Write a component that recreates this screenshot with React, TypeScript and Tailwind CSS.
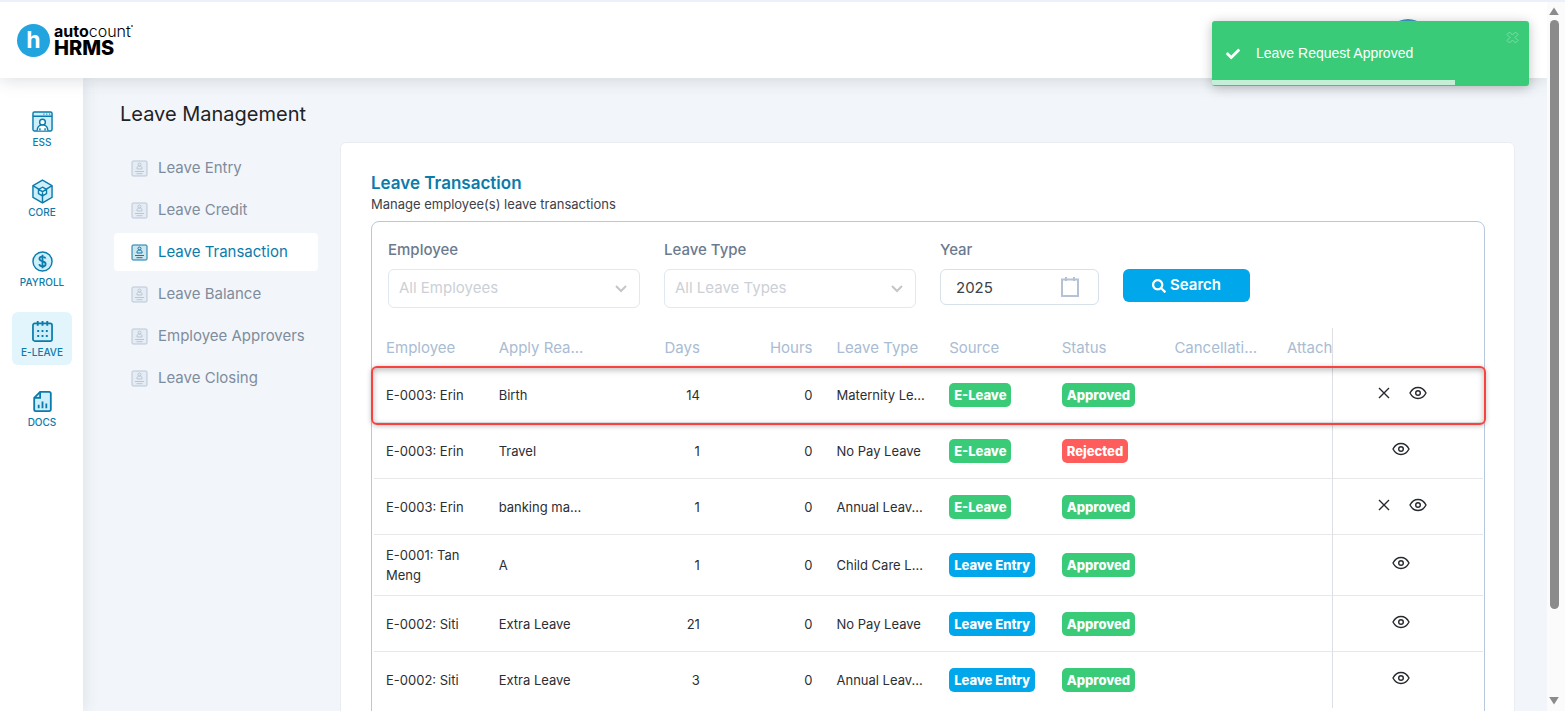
import React from "react";
import { FaCheck, FaSearch } from "react-icons/fa";
import clsx from "clsx";

interface LeaveRow {
  employee: string;
  reason: string;
  days: number;
  hours: number;
  leaveType: string;
  source: "E-Leave" | "Leave Entry";
  status: "Approved" | "Rejected";
  cancellable?: boolean;
  highlighted?: boolean;
}

const rows: LeaveRow[] = [
  { employee: "E-0003: Erin", reason: "Birth", days: 14, hours: 0, leaveType: "Maternity Le...", source: "E-Leave", status: "Approved", cancellable: true, highlighted: true },
  { employee: "E-0003: Erin", reason: "Travel", days: 1, hours: 0, leaveType: "No Pay Leave", source: "E-Leave", status: "Rejected" },
  { employee: "E-0003: Erin", reason: "banking ma...", days: 1, hours: 0, leaveType: "Annual Leav...", source: "E-Leave", status: "Approved", cancellable: true },
  { employee: "E-0001: Tan Meng", reason: "A", days: 1, hours: 0, leaveType: "Child Care L...", source: "Leave Entry", status: "Approved" },
  { employee: "E-0002: Siti", reason: "Extra Leave", days: 21, hours: 0, leaveType: "No Pay Leave", source: "Leave Entry", status: "Approved" },
  { employee: "E-0002: Siti", reason: "Extra Leave", days: 3, hours: 0, leaveType: "Annual Leav...", source: "Leave Entry", status: "Approved" },
];

const menu = [
  "Leave Entry",
  "Leave Credit",
  "Leave Transaction",
  "Leave Balance",
  "Employee Approvers",
  "Leave Closing",
];

const badgeColors = {
  "E-Leave": "bg-[#3acb78]",
  "Leave Entry": "bg-[#00a7ea]",
  Approved: "bg-[#3acb78]",
  Rejected: "bg-[#ff5c5c]",
};

const moduleIcons = {
  ESS: (
    <>
      <rect x="1" y="1" width="20" height="20" rx="1.5" fill="#cdeffb" />
      <path d="M1 5.5h20M12 3.3h1M15 3.3h1M18 3.3h1" />
      <circle cx="11" cy="11.7" r="3" fill="#fff" />
      <path d="M5.5 20.5c0-3 2-5.2 4-5.7h3c2 .5 4 2.700 4 5.700M8.300 18v2.500M13.700 18v2.500" fill="#fff" />
    </>
  ),
  CORE: (
    <>
      <path d="M11-1 21 4.800v12.400L11 23 1 17.200V4.800z" fill="#cdeffb" />
      <path d="m1 4.800 6 3.700M21 4.800l-6 3.700M11 15.500V23" />
      <path d="m11 6.500 4.200 2.300v4.500L11 15.700l-4.200-2.400V8.800zM6.800 8.800 11 11.200l4.200-2.400M11 11.200v4.500" fill="#e6f7fd" />
    </>
  ),
  PAYROLL: (
    <>
      <circle cx="11" cy="11" r="10" fill="#cdeffb" />
      <path d="M14.200 7.800c-.4-1.300-1.500-2-3.200-2-1.900 0-3.200.9-3.200 2.400 0 3.600 6.500 1.700 6.500 5.300 0 1.600-1.400 2.600-3.300 2.600-1.800 0-3.100-.8-3.400-2.300M11 4v14" strokeWidth="1.900" />
    </>
  ),
  "E-LEAVE": (
    <>
      <rect x="1" y="2.500" width="20" height="18.500" rx="2" fill="#cdeffb" strokeWidth="1.800" />
      <path d="M6 0v5M11 0v5M16 0v5" strokeWidth="2" />
      <path d="M5.500 10.500h2M10 10.500h2M14.500 10.500h2M5.500 15.700h2M10 15.700h2M14.500 15.700h2" strokeWidth="2" />
    </>
  ),
  DOCS: (
    <>
      <path d="M8.500 1H18a1.700 1.700 0 0 1 1.700 1.700v16.600A1.700 1.700 0 0 1 18 21H4a1.700 1.700 0 0 1-1.700-1.700V7.200z" fill="#cdeffb" strokeWidth="1.900" />
      <path d="M8.500 1v6.200H2.300M7 14.500V18M11 11v7M15 13v5" strokeWidth="1.900" />
    </>
  ),
};

const EntryIcon = () => (
  <svg viewBox="0 0 17 17" className="size-[17px] shrink-0" fill="none" stroke="currentColor">
    <rect x="1" y="1" width="15" height="15" rx="1" fill="currentColor" fillOpacity="0.2" />
    <circle cx="8.500" cy="4.500" r="1.500" />
    <path d="M6 9V8c0-1.300 1-2 2.500-2S11 6.700 11 8v1zM4 11.500h9M5.500 13.700h6" />
  </svg>
);

const EyeIcon = () => (
  <svg viewBox="0 0 18 14" className="h-3.5 w-[18px]" fill="none" stroke="currentColor" strokeWidth="1.400">
    <path d="M1 7c1.800-3.500 4.600-5.500 8-5.500S15.200 3.500 17 7c-1.800 3.500-4.600 5.500-8 5.500S2.800 10.500 1 7z" />
    <circle cx="9" cy="7" r="2.300" />
  </svg>
);

const CrossIcon = () => (
  <svg viewBox="0 0 18 14" className="h-3.5 w-[18px]" fill="none" stroke="currentColor" strokeWidth="1.400">
    <path d="m4 2 10 10M14 2 4 12" />
  </svg>
);

const Chevron = () => (
  <svg viewBox="0 0 12 8" className="pointer-events-none absolute right-[13px] top-4 h-2 w-3" fill="none" stroke="#c3c6ca" strokeWidth="2">
    <path d="m1 1 5 5 5-5" />
  </svg>
);

const Badge: React.FC<{ label: keyof typeof badgeColors }> = ({ label }) => (
  <span className={clsx("inline-block rounded-[5px] px-[5px] text-[13px] font-extrabold leading-6 text-white", badgeColors[label])}>
    {label}
  </span>
);

const Toast = () => (
  <div role="status" className="absolute right-9 top-[19px] z-20 flex h-[65px] w-[317px] items-center overflow-hidden rounded-[3px] bg-[#3acb78] pl-3.5 shadow-[0_2px_12px_rgba(0,0,0,0.25)]">
    <FaCheck className="size-3.5 text-white" />
    <span className="ml-4 font-['Liberation_Sans',sans-serif] text-[14px] text-white">Leave Request Approved</span>
    <button type="button" aria-label="Close" className="absolute right-2.5 top-2.5 text-[#7bdda5]">
      <svg viewBox="0 0 13 13" className="size-[13px]" fill="none" stroke="currentColor">
        <path d="m3.500 1 3 3 3-3L12 3.500l-3 3 3 3L9.500 12l-3-3-3 3L1 9.500l3-3-3-3z" />
      </svg>
    </button>
    <div className="absolute bottom-px left-0 h-[5px] w-[243px] bg-[#c4efd7]" />
  </div>
);

const Header = () => (
  <header className="relative z-10 flex h-[76px] shrink-0 items-center justify-between bg-white pl-[17px] pr-[118px] shadow-[0_2px_16px_rgba(60,70,90,0.18)]">
    <a href="#" className="flex items-center gap-1">
      <span className="flex size-[33px] items-center justify-center rounded-full bg-[#22a4df] text-[23px] font-bold text-white">h</span>
      <span className="flex flex-col text-black">
        <span className="flex text-[16px] leading-4">
          <b>auto</b>
          <span className="font-light">count</span>
          <span className="mt-0.5 size-0.5 rounded-full bg-[#555]" />
        </span>
        <span className="text-[20px] font-extrabold leading-[18px]">HRMS</span>
      </span>
    </a>
    <span className="size-[42px] rounded-full bg-[#3b9cc4]" />
  </header>
);

const Sidebar = () => (
  <nav className="flex w-[83px] shrink-0 flex-col items-center gap-[17px] bg-white pl-px pt-6 text-[#0b7bab] shadow-[2px_0_14px_rgba(60,70,90,0.1)]">
    {(Object.keys(moduleIcons) as (keyof typeof moduleIcons)[]).map((name) => (
      <a
        key={name}
        href="#"
        className={clsx("flex h-[53px] w-[60px] flex-col items-center gap-1 rounded-md pt-[9px]", name === "E-LEAVE" && "bg-[#e2f5fd]")}
      >
        <svg viewBox="0 0 22 22" className="size-[21px] shrink-0 overflow-visible" fill="none" stroke="currentColor" strokeWidth="1.500">
          {moduleIcons[name]}
        </svg>
        <span className="text-[10px] font-medium leading-3">{name}</span>
      </a>
    ))}
  </nav>
);

const LeaveMenu = () => (
  <aside className="w-[235px] shrink-0 pl-[31px] pt-6">
    <h1 className="pl-1.5 text-[20px] leading-6 text-[#1f2226]">Leave Management</h1>
    <ul className="mt-[23px] flex flex-col gap-1">
      {menu.map((item) => (
        <li key={item}>
          <a
            href="#"
            className={clsx(
              "flex h-[38px] items-center gap-2.5 rounded pl-[17px] text-[15px]",
              item === "Leave Transaction" ? "bg-white text-[#0b7bab]" : "text-[#7f8c9d]"
            )}
          >
            <span className={item === "Leave Transaction" ? "text-[#0b7bab]" : "text-[#b9c6d8]"}>
              <EntryIcon />
            </span>
            {item}
          </a>
        </li>
      ))}
    </ul>
  </aside>
);

const Filters = () => (
  <form className="flex items-start gap-6 pl-4 pt-[18px] text-[15px] text-[#6b7a8d]">
    <div className="w-[252px]">
      <label htmlFor="employee" className="block font-medium leading-5">Employee</label>
      <div className="relative mt-[9px]">
        <select id="employee" className="h-[39px] w-full appearance-none rounded-md border border-[#e0e8f0] bg-white pl-2.5 text-[#ccd0d6]">
          <option>All Employees</option>
        </select>
        <Chevron />
      </div>
    </div>
    <div className="w-[252px]">
      <label htmlFor="leave-type" className="block font-medium leading-5">Leave Type</label>
      <div className="relative mt-[9px]">
        <select id="leave-type" className="h-[39px] w-full appearance-none rounded-md border border-[#e0e8f0] bg-white pl-2.5 text-[#ccd0d6]">
          <option>All Leave Types</option>
        </select>
        <Chevron />
      </div>
    </div>
    <div className="w-[159px]">
      <label htmlFor="year" className="block font-medium leading-5">Year</label>
      <div className="relative mt-[9px]">
        <input id="year" type="text" defaultValue="2025" className="h-9 w-full rounded-md border border-[#d7e1ec] bg-white px-[15px] text-[#3d4148]" />
        <svg viewBox="0 0 18 20" className="pointer-events-none absolute right-5 top-2 h-5 w-[18px]" fill="none" stroke="#b3c2d6" strokeWidth="2">
          <path d="M1 2.500h16V19H1zM5 0v4M13 0v4" />
        </svg>
      </div>
    </div>
    <button type="button" className="mt-[29px] flex h-[33px] w-[127px] items-center justify-center gap-1 rounded-md bg-[#00a7ea] font-semibold text-white">
      <FaSearch className="size-3.5" />
      Search
    </button>
  </form>
);

const LeaveTable = () => (
  <div className="ml-0.5 mr-px mt-5">
    <table className="w-full table-fixed border-separate border-spacing-0 text-[13px] leading-5 text-[#2b2e33]">
      <colgroup>
        <col />
        <col />
        <col />
        <col />
        <col />
        <col />
        <col />
        <col />
        <col className="w-[57px]" />
        <col className="w-[151px]" />
      </colgroup>
      <thead>
        <tr className="h-[39px] text-left text-[15px] text-[#a9bcd2] [&>th]:px-3 [&>th]:font-normal">
          <th>Employee</th>
          <th>Apply Rea...</th>
          <th className="text-right">Days</th>
          <th className="text-right">Hours</th>
          <th className="whitespace-nowrap">Leave Type</th>
          <th>Source</th>
          <th>Status</th>
          <th>Cancellati...</th>
          <th className="overflow-hidden pr-0!">Attach</th>
          <th className="border-l border-[#dcdfe3]" aria-label="Actions" />
        </tr>
      </thead>
      <tbody>
        {rows.map((row, i) => (
          <tr
            key={i}
            className="relative h-14 [&:not(:last-child)>td]:border-b [&:not(:last-child)>td]:border-b-[#e6e7e9] [&>td]:px-3 [&>td]:py-2.5"
          >
            <td>
              {row.employee}
              {row.highlighted && (
                <span className="pointer-events-none absolute -inset-x-[3px] -bottom-0.5 -top-px z-10 rounded-md border-2 border-[#f8423f] shadow-[0_1px_5px_rgba(0,0,0,0.25),inset_0_2px_6px_rgba(0,0,0,0.28)]" />
              )}
            </td>
            <td className="whitespace-nowrap">{row.reason}</td>
            <td className="text-right">{row.days}</td>
            <td className="text-right">{row.hours}</td>
            <td className="whitespace-nowrap">{row.leaveType}</td>
            <td className="whitespace-nowrap"><Badge label={row.source} /></td>
            <td><Badge label={row.status} /></td>
            <td />
            <td />
            <td className="border-l border-l-[#dcdfe3]">
              <div className="flex items-center justify-center gap-4 pb-1 pr-3.5 text-[#26292e]">
                {row.cancellable && (
                  <button type="button" aria-label="Cancel leave"><CrossIcon /></button>
                )}
                <button type="button" aria-label="View leave"><EyeIcon /></button>
              </div>
            </td>
          </tr>
        ))}
      </tbody>
    </table>
  </div>
);

const Scrollbar = () => (
  <div className="flex w-[18px] shrink-0 flex-col items-center bg-[#fbfbfb] pb-1.5 pr-1 pt-[5px]">
    <svg viewBox="0 0 10 8" className="h-2 w-2.5" fill="#8b8b8b">
      <path d="M5 0.500 9.800 8H.2z" />
    </svg>
    <div className="mt-[5px] flex w-[9px] flex-1 flex-col">
      <div className="h-[87%] rounded-full bg-[#8b8b8b]" />
    </div>
    <svg viewBox="0 0 10 8" className="h-2 w-2.5" fill="#8b8b8b">
      <path d="M5 7.500 9.800 0H.2z" />
    </svg>
  </div>
);

export default function App() {
  return (
    <div className="relative flex h-screen flex-col overflow-hidden border-t-2 border-[#ebf0fb] bg-[#f2f6fa] font-[Inter,sans-serif]">
      <div className="flex min-h-0 flex-1">
        <div className="flex min-w-0 flex-1 flex-col overflow-hidden">
          <Header />
          <div className="flex min-h-0 flex-1">
            <Sidebar />
            <LeaveMenu />
            <main className="min-w-0 flex-1 pl-[22px] pr-8 pt-16">
              <section className="min-h-full rounded-md border border-[#e9edf1] bg-white pl-[30px] pr-[29px] pt-7">
                <h2 className="text-[17px] font-semibold leading-6 text-[#0b7bab]">Leave Transaction</h2>
                <p className="text-[13px] leading-[18px] text-[#3d4148]">Manage employee(s) leave transactions</p>
                <div className="mt-2 rounded-lg border border-[#b7c8dc] pb-10">
                  <Filters />
                  <LeaveTable />
                </div>
              </section>
            </main>
          </div>
        </div>
        <Scrollbar />
      </div>
      <Toast />
    </div>
  );
}
